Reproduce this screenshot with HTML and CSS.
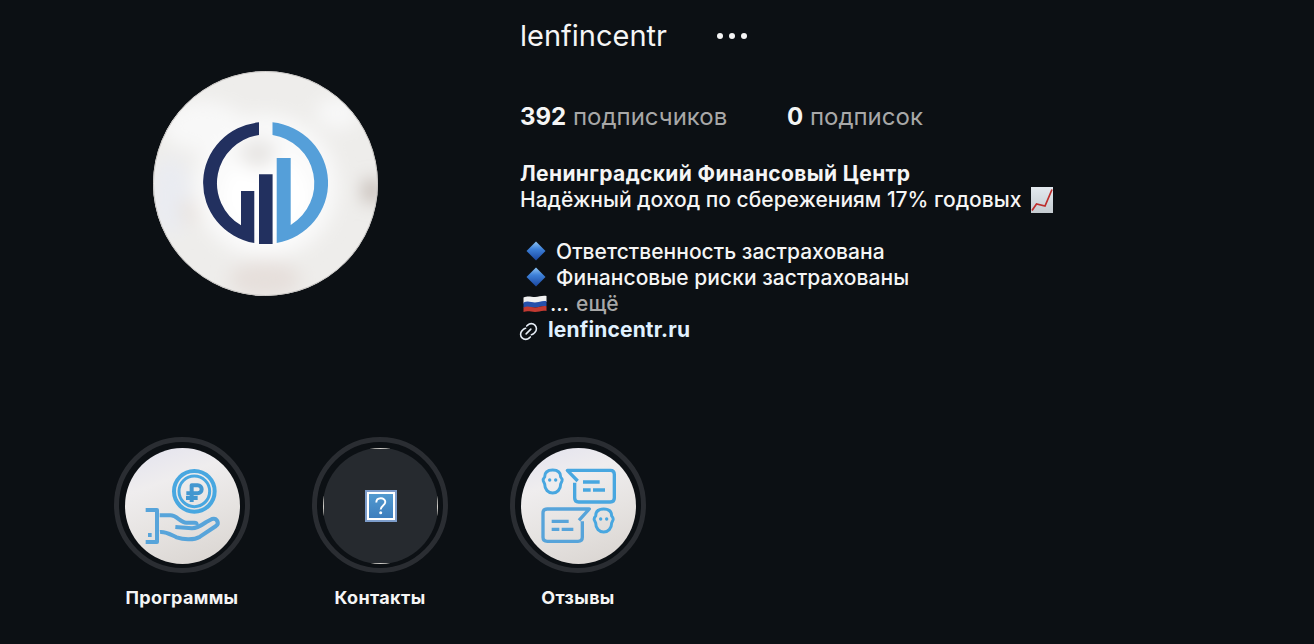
FILE: index.html
```
<!DOCTYPE html>
<html lang="ru">
<head>
    <meta charset="UTF-8">
    <meta name="viewport" content="width=device-width, initial-scale=1.0">
    <title>lenfincentr</title>
    <link rel="stylesheet" href="styles.css">
</head>
<body>
    <header class="profile">
        <div class="avatar">
            <svg viewBox="0 0 225 225">
                <defs>
                    <filter id="soft" x="-50%" y="-50%" width="200%" height="200%"><feGaussianBlur stdDeviation="9"/></filter>
                </defs>
                <rect width="225" height="225" fill="#eeedeb"/>
                <g filter="url(#soft)">
                    <ellipse cx="50" cy="55" rx="42" ry="25" fill="#f8f8f8"/>
                    <ellipse cx="18" cy="125" rx="20" ry="38" fill="#eaecf2"/>
                    <ellipse cx="38" cy="140" rx="12" ry="12" fill="#e9e3df"/>
                    <ellipse cx="185" cy="42" rx="22" ry="16" fill="#f8f8f8"/>
                    <ellipse cx="113" cy="115" rx="72" ry="72" fill="#f9f9f9"/>
                    <ellipse cx="113" cy="125" rx="45" ry="45" fill="#fff"/>
                    <ellipse cx="105" cy="83" rx="18" ry="14" fill="#e6e4e2"/>
                    <ellipse cx="112" cy="208" rx="36" ry="18" fill="#e6dfdb"/>
                    <ellipse cx="219" cy="120" rx="9" ry="12" fill="#bdb2ac"/>
                </g>
                <path fill="#22305f" d="M106 51.3A62.3 61 0 0 0 101.3 172V120H88v34.3A49.6 49 0 0 1 106 63.9z"/>
                <path fill="#22305f" d="M106 103.3h13.6V173H106z"/>
                <path fill="#559fd9" d="M119.5 51.3A62.3 61 0 0 1 123.7 172V87h14v67A49.6 49 0 0 0 119.5 63.9z"/>
                <circle cx="112.5" cy="112.5" r="112" fill="none" stroke="#c6c3c1"/>
            </svg>
        </div>

        <div class="info">
            <div class="title">
                <h1>lenfincentr</h1>
                <div class="more"><i></i><i></i><i></i></div>
            </div>

            <div class="stats">
                <div class="followers"><b>392</b> <span>подписчиков</span></div>
                <div class="following"><b>0</b> <span>подписок</span></div>
            </div>

            <div class="bio">
                <p class="name">Ленинградский Финансовый Центр</p>
                <p class="line rate"><span>Надёжный доход по сбережениям 17% годовых</span>
                    <svg class="chart" viewBox="0 0 22 26">
                        <defs>
                            <linearGradient id="paper" x1="0" y1="0" x2="0" y2="1">
                                <stop offset="0" stop-color="#e3e9ef"/><stop offset="1" stop-color="#c5cbd0"/>
                            </linearGradient>
                        </defs>
                        <rect width="22" height="26" fill="url(#paper)"/>
                        <path fill="none" stroke="#bd2d2c" stroke-width="1.700" d="M1 23.500l4.500-6.500 8.500 2L21 2.500"/>
                    </svg>
                </p>
                <p class="line">&nbsp;</p>
                <p class="line item">
                    <svg class="diamond" viewBox="0 0 20 20">
                        <defs>
                            <linearGradient id="blue" x1="0" y1="0" x2="0" y2="1">
                                <stop offset="0" stop-color="#8fc4f3"/><stop offset=".4" stop-color="#3d80d8"/><stop offset="1" stop-color="#1a459f"/>
                            </linearGradient>
                        </defs>
                        <path fill="url(#blue)" d="M10 .5L19.500 10 10 19.500.5 10z"/>
                    </svg>
                    <span>Ответственность застрахована</span>
                </p>
                <p class="line item">
                    <svg class="diamond" viewBox="0 0 20 20"><path fill="url(#blue)" d="M10 .5L19.500 10 10 19.500.5 10z"/></svg>
                    <span>Финансовые риски застрахованы</span>
                </p>
                <p class="line last">
                    <svg class="flag" viewBox="0 0 24 18">
                        <path fill="#f1f1f1" d="M.5 2.500C5 .5 8 2 12 2S19 .3 23.500 1V7C19 6 16 8 12 8S5 6.500.5 8.500z"/>
                        <path fill="#2550ab" d="M.5 7.500C5 5.500 8 7.500 12 7.500S19 5.500 23.500 6.300v5C19 10.500 16 12.500 12 12.500S5 11 .5 13z"/>
                        <path fill="#c33a32" d="M.5 12.500C5 10.500 8 12.500 12 12.500S19 10.500 23.500 11.300V16C19 15 16 17 12 17S5 15.500.5 17z"/>
                    </svg>
                    <span class="dots">...</span> <span class="expand">ещё</span>
                </p>
                <p class="line site">
                    <svg class="link" viewBox="0 0 24 24" fill="none" stroke="#e6edf6" stroke-width="2" stroke-linecap="round">
                        <path d="m9.726 5.123 1.228-1.228a6.470 6.470 0 0 1 9.150 9.152l-1.227 1.227q-1.500 1.400-3.200 1.800m-1.400 2.803-1.228 1.228a6.470 6.470 0 0 1-9.150-9.152l1.227-1.227q1.500-1.400 3.200-1.800"/>
                        <path d="M9 15l6-6"/>
                    </svg>
                    <a>lenfincentr.ru</a>
                </p>
            </div>
        </div>
    </header>

    <section class="stories">
        <div class="story">
            <div class="ring">
                <div class="cover">
                    <svg viewBox="60 54 345 348" fill="none" stroke="#48a7e0" stroke-width="12" stroke-linejoin="round">
                        <circle cx="268" cy="184" r="61"/>
                        <circle cx="268" cy="184" r="46" stroke-width="9"/>
                        <path stroke="#4397d0" d="M260 216v-50h18a12 12 0 0 1 0 24h-34M243 204h35"/>
                        <g stroke="#57a4da">
                            <path d="M122 240h34v96h-34M164 256h32c20 0 30 22 48 22h24q8 0 7 7"/>
                            <path d="M211 291l50 4c12 0 30-10 43-19l17-9c15-4 23 13 12 21l-48 32c-20 12-52 8-70 2-18-8-32-18-50-16"/>
                            <path d="M129 315h11"/>
                        </g>
                    </svg>
                </div>
            </div>
            <span>Программы</span>
        </div>

        <div class="story">
            <div class="ring">
                <div class="cover missing">
                    <svg class="unknown" viewBox="0 0 32 32">
                        <defs>
                            <linearGradient id="sky" x1="0" y1="0" x2="0" y2="1">
                                <stop offset="0" stop-color="#539bd0"/><stop offset="1" stop-color="#3c7dbd"/>
                            </linearGradient>
                        </defs>
                        <rect width="32" height="32" fill="#7d9dcb"/>
                        <rect x="3" y="3" width="26" height="26" fill="url(#sky)" stroke="#fff" stroke-width="2"/>
                        <path fill="none" stroke="#fff" stroke-width="1.900" d="M11.300 12.500c0-5.500 9-5.500 9-.5 0 3.500-4.600 3.500-4.600 7.500"/>
                        <circle cx="15.700" cy="22.800" r="1.500" fill="#fff"/>
                    </svg>
                </div>
            </div>
            <span>Контакты</span>
        </div>

        <div class="story">
            <div class="ring">
                <div class="cover">
                    <svg viewBox="63 54 345 348" fill="none" stroke="#48a7e0" stroke-width="10" stroke-linejoin="round">
                        <path d="M233 153l-31-32h129q12 0 12 12v71q0 12-12 12h-95q-12 0-12-12v-46"/>
                        <path d="M249 156h50M249 180h23M279 180h36"/>
                        <g id="face">
                            <path stroke-width="9" d="M134 141C134 125 143 120 158 120s24 5 24 21q6 6 4 12l-4 9c0 17-11 27-24 27s-24-10-24-27l-4-9q-2-6 4-12z"/>
                            <path stroke-linecap="round" d="M149 150h.1M167 150h.1"/>
                        </g>
                        <g stroke="#57a4da">
                            <path d="M237 271l31-34H142q-13 0-13 12v73q0 12 13 12h92q13 0 13-12v-48"/>
                            <path d="M155 274h51M155 298h23M185 298h35"/>
                        </g>
                        <use href="#face" x="153" y="117"/>
                    </svg>
                </div>
            </div>
            <span>Отзывы</span>
        </div>
    </section>
</body>
</html>
```
FILE: styles.css
```
* {
    box-sizing: border-box;
}

body {
    margin: 0;
    height: 644px;
    overflow: hidden;
    background: #0c1014;
    color: #f5f5f5;
    font-family: Inter, "Liberation Sans", sans-serif;
}

h1, p {
    margin: 0;
}

svg {
    display: block;
    flex-shrink: 0;
}

.profile {
    display: flex;
    height: 437px;
    padding: 16px 0 0 153px;
}

.avatar {
    width: 225px;
    height: 225px;
    margin: 55px 142px 0 0;
    border-radius: 50%;
    overflow: hidden;
    flex-shrink: 0;
}

.title {
    display: flex;
    align-items: center;
    height: 40px;
}

h1 {
    width: 197px;
    font-size: 29px;
    font-weight: 400;
    line-height: 40px;
    letter-spacing: 0;
}

.more {
    display: flex;
    gap: 6px;
}

.more i {
    width: 6px;
    height: 6px;
    border-radius: 50%;
    background: #f5f5f5;
}

.stats {
    display: flex;
    margin-top: 46px;
    height: 30px;
    line-height: 30px;
    font-size: 24px;
    white-space: nowrap;
}

.stats b {
    font-weight: 700;
}

.stats span {
    color: #a8a8a8;
}

.followers {
    width: 267px;
}

.bio {
    margin-top: 29px;
    font-size: 21px;
    font-weight: 450;
    line-height: 26px;
    white-space: nowrap;
}

.name {
    font-weight: 700;
    letter-spacing: 0.36px;
}

.line {
    display: flex;
    align-items: center;
    height: 26px;
}

.item {
    letter-spacing: 0.04px;
}

.chart {
    width: 22px;
    height: 26px;
    margin: -1px 0 0 10px;
}

.diamond {
    width: 20px;
    height: 20px;
    margin: -2px 10px 0 6px;
}

.flag {
    width: 24px;
    height: 18px;
    margin: -1px 3px 0;
}

.expand {
    margin-left: 7px;
    color: #a8a8a8;
}

.link {
    width: 19px;
    height: 19px;
    margin: 2px 10px 0 -1px;
}

.site a {
    color: #e0f1ff;
    font-weight: 700;
    letter-spacing: 0.15px;
}

.stories {
    display: flex;
    gap: 62px;
    padding-left: 114px;
}

.story {
    width: 136px;
    font-size: 18px;
    font-weight: 700;
    line-height: 24px;
    text-align: center;
    letter-spacing: 0.35px;
}

.ring {
    display: flex;
    justify-content: center;
    height: 136px;
    margin-bottom: 13px;
    padding-top: 6px;
    border: 5px solid #2a2d32;
    border-radius: 50%;
}

.cover {
    width: 115px;
    height: 116px;
    border-radius: 50%;
    overflow: hidden;
    background: linear-gradient(160deg, #e2e2ee 0%, #efedee 30%, #e6e3e1 60%, #d8d3cf 100%);
}

.missing {
    display: flex;
    align-items: center;
    justify-content: center;
    /* light slivers where the circle touches its box */
    border: 1px solid transparent;
    background:
        linear-gradient(#cdcbc6, #cdcbc6) 50% 0 / 20px 1px no-repeat border-box,
        linear-gradient(#cdcbc6, #cdcbc6) 50% 100% / 20px 1px no-repeat border-box,
        linear-gradient(#cdcbc6, #cdcbc6) 0 50% / 1px 20px no-repeat border-box,
        linear-gradient(#cdcbc6, #cdcbc6) 100% 50% / 1px 20px no-repeat border-box,
        #262a2f;
}

.unknown {
    width: 32px;
    height: 32px;
    margin-left: 1px;
}
```
